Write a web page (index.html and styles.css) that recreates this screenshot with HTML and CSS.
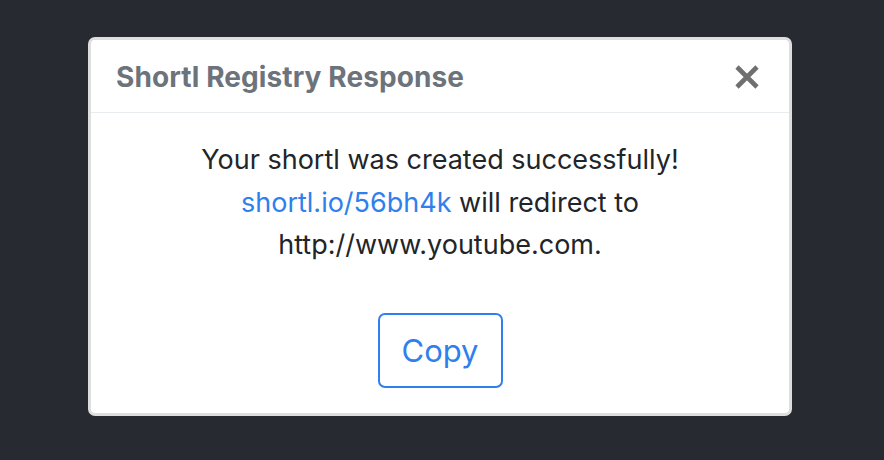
FILE: index.html
```html
<!DOCTYPE html>
<html>
<head>
<meta charset="utf-8">
<link rel="stylesheet" href="styles.css">
</head>
<body>
<div class="modal">
  <div class="modal-header">
    <h5 class="modal-title">Shortl Registry Response</h5>
    <button class="close" aria-label="Close">
      <svg width="26" height="26" viewBox="0 0 26 26"><path d="M3 3 L23 23 M23 3 L3 23" stroke="#6f6f6f" stroke-width="4.6" stroke-linecap="butt"/></svg>
    </button>
  </div>
  <div class="modal-body">
    <p class="message">Your shortl was created successfully!<br><a class="link" href="#">shortl.io/56bh4k</a> will redirect to<br>http://www.youtube.com.</p>
    <button class="copy-btn">Copy</button>
  </div>
</div>
</body>
</html>
```
FILE: styles.css
```css
html, body {
  margin: 0;
  padding: 0;
}
body {
  background: #282a32;
  width: 884px;
  height: 460px;
  padding: 37px 0 0 88px;
  box-sizing: border-box;
  font-family: Inter, "Noto Sans", sans-serif;
}
.modal {
  width: 704px;
  height: 379px;
  box-sizing: border-box;
  background: #fff;
  border: 3px solid #dedede;
  border-radius: 7px;
  display: flex;
  flex-direction: column;
}
.modal-header {
  height: 73px;
  box-sizing: border-box;
  border-bottom: 1px solid #e9ecef;
  display: flex;
  align-items: center;
  justify-content: space-between;
  padding: 2px 29px 0 25px;
}
.modal-title {
  margin: 0;
  font-size: 28px;
  font-weight: 700;
  color: #6c737b;
  letter-spacing: 0.1px;
}
.close {
  background: none;
  border: 0;
  padding: 0;
  width: 26px;
  height: 26px;
  display: flex;
}
.modal-body {
  flex: 1;
  display: flex;
  flex-direction: column;
  align-items: center;
  padding-top: 26px;
}
.message {
  margin: 0;
  text-align: center;
  font-size: 27px;
  line-height: 42.5px;
  color: #212529;
}
.link {
  color: #2f80ed;
  text-decoration: none;
}
.copy-btn {
  margin-top: 46px;
  width: 125px;
  height: 75px;
  box-sizing: border-box;
  background: #fff;
  border: 2px solid #2f80ed;
  border-radius: 7px;
  color: #2f80ed;
  font-family: Inter, "Noto Sans", sans-serif;
  font-size: 31px;
}
```
